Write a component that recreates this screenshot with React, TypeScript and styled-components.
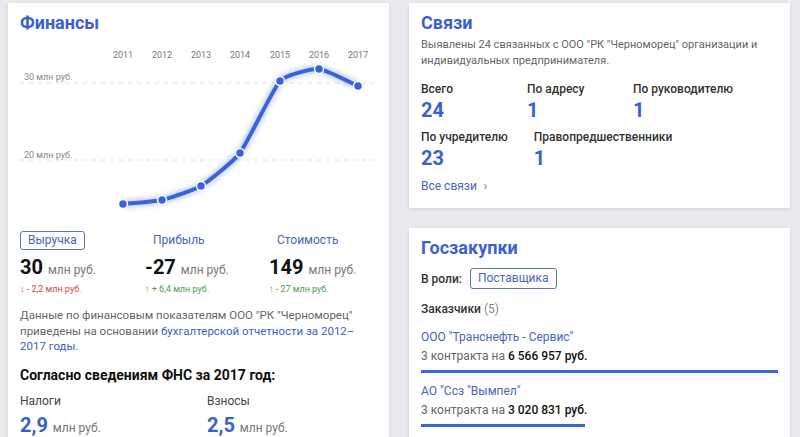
import React from "react";
import styled, { createGlobalStyle } from "styled-components";

const GlobalStyle = createGlobalStyle`
  html, body {
    margin: 0;
    padding: 0;
    background: #e8eaed;
    font-family: Roboto, "Noto Sans", sans-serif;
    color: #222;
  }
`;

const years = ["2011", "2012", "2013", "2014", "2015", "2016", "2017"];
const points: [number, number][] = [
  [103, 164],
  [142, 160],
  [181, 146],
  [220, 113],
  [260, 41],
  [299, 29],
  [338, 46],
];

// catmull-rom в кривые безье
const smoothPath = (pts: [number, number][]) => {
  let d = `M ${pts[0][0]} ${pts[0][1]}`;
  for (let i = 0; i < pts.length - 1; i++) {
    const p0 = pts[i - 1] || pts[i];
    const p1 = pts[i];
    const p2 = pts[i + 1];
    const p3 = pts[i + 2] || p2;
    const t = 0.08;
    const c1x = p1[0] + (p2[0] - p0[0]) * t;
    const c1y = p1[1] + (p2[1] - p0[1]) * t;
    const c2x = p2[0] - (p3[0] - p1[0]) * t;
    const c2y = p2[1] - (p3[1] - p1[1]) * t;
    d += ` C ${c1x} ${c1y}, ${c2x} ${c2y}, ${p2[0]} ${p2[1]}`;
  }
  return d;
};

const Chart = () => (
  <ChartSvg width={357} height={180} viewBox="0 0 357 180">
    <defs>
      <filter id="glow" x="-20%" y="-20%" width="140%" height="140%">
        <feGaussianBlur stdDeviation="2.5" />
      </filter>
    </defs>
    {years.map((y, i) => (
      <text key={y} x={points[i][0]} y={18} textAnchor="middle" fontSize="9" fill="#777">
        {y}
      </text>
    ))}
    <text x={4} y={40} fontSize="9" fill="#888">30 млн руб.</text>
    <line x1={0} x2={355} y1={43} y2={43} stroke="#e2e2e2" strokeDasharray="4 5" />
    <text x={4} y={118} fontSize="9" fill="#888">20 млн руб.</text>
    <line x1={0} x2={355} y1={120} y2={120} stroke="#e2e2e2" strokeDasharray="4 5" />
    <path d={smoothPath(points)} fill="none" stroke="#9db3f2" strokeWidth={8} opacity={0.6} filter="url(#glow)" />
    <path d={smoothPath(points)} fill="none" stroke="#3a63d8" strokeWidth={4} strokeLinecap="round" />
    {points.map(([x, y]) => (
      <circle key={x} cx={x} cy={y} r={4.5} fill="#3a63d8" stroke="#fff" strokeWidth={1.5} />
    ))}
  </ChartSvg>
);

const App = () => {
  return (
    <>
      <GlobalStyle />
      <Page>
        <Card>
          <Title>Финансы</Title>
          <Chart />
          <Metrics>
            <Metric>
              <Tab active>Выручка</Tab>
              <Value>
                30 <Unit>млн руб.</Unit>
              </Value>
              <Change down>↓ - 2,2 млн руб.</Change>
            </Metric>
            <Metric>
              <Tab>Прибыль</Tab>
              <Value>
                -27 <Unit>млн руб.</Unit>
              </Value>
              <Change>↑ + 6,4 млн руб.</Change>
            </Metric>
            <Metric>
              <Tab>Стоимость</Tab>
              <Value>
                149 <Unit>млн руб.</Unit>
              </Value>
              <Change>↑ - 27 млн руб.</Change>
            </Metric>
          </Metrics>
          <Note>
            Данные по финансовым показателям ООО "РК "Черноморец" приведены на
            основании <A>бухгалтерской отчетности за 2012–2017 годы.</A>
          </Note>
          <Subtitle>Согласно сведениям ФНС за 2017 год:</Subtitle>
          <Taxes>
            <TaxItem>
              <TaxLabel>Налоги</TaxLabel>
              <TaxValue>
                2,9 <Unit>млн руб.</Unit>
              </TaxValue>
            </TaxItem>
            <TaxItem>
              <TaxLabel>Взносы</TaxLabel>
              <TaxValue>
                2,5 <Unit>млн руб.</Unit>
              </TaxValue>
            </TaxItem>
          </Taxes>
        </Card>

        <Column>
          <Card>
            <Title>Связи</Title>
            <Desc>
              Выявлены 24 связанных с ООО "РК "Черноморец" организации и
              индивидуальных предпринимателя.
            </Desc>
            <Stats>
              <Stat>
                <StatLabel>Всего</StatLabel>
                <StatValue>24</StatValue>
              </Stat>
              <Stat>
                <StatLabel>По адресу</StatLabel>
                <StatValue>1</StatValue>
              </Stat>
              <Stat>
                <StatLabel>По руководителю</StatLabel>
                <StatValue>1</StatValue>
              </Stat>
              <Stat>
                <StatLabel>По учредителю</StatLabel>
                <StatValue>23</StatValue>
              </Stat>
              <Stat>
                <StatLabel>Правопредшественники</StatLabel>
                <StatValue>1</StatValue>
              </Stat>
            </Stats>
            <MoreLink>
              Все связи <Chevron>›</Chevron>
            </MoreLink>
          </Card>

          <Card grow>
            <Title>Госзакупки</Title>
            <RoleRow>
              <b>В роли:</b>
              <Tab active>Поставщика</Tab>
            </RoleRow>
            <Customers>
              Заказчики <Count>(5)</Count>
            </Customers>
            <CustomerList>
              <Customer>
                <CustomerName>ООО "Транснефть - Сервис"</CustomerName>
                <Contracts>
                  3 контракта на <strong>6 566 957 руб.</strong>
                </Contracts>
                <Bar style={{ width: "100%" }} />
              </Customer>
              <Customer>
                <CustomerName>АО "Ссз "Вымпел"</CustomerName>
                <Contracts>
                  3 контракта на <strong>3 020 831 руб.</strong>
                </Contracts>
                <Bar style={{ width: "46%" }} />
              </Customer>
            </CustomerList>
          </Card>
        </Column>
      </Page>
    </>
  );
};

const Page = styled.div`
  display: grid;
  grid-template-columns: 381px 381px;
  column-gap: 20px;
  padding: 3px 0 0 8px;
  height: 434px;
  overflow: hidden;
`;

const Column = styled.div`
  display: flex;
  flex-direction: column;
  gap: 20px;
`;

const Card = styled.div<{ grow?: boolean }>`
  background: #fff;
  box-shadow: 0 1px 4px rgba(0, 0, 0, 0.1);
  padding: 8px 12px 12px;
  box-sizing: border-box;
  ${(p) => (p.grow ? "flex: 1;" : "")}
`;

const Title = styled.div`
  font-size: 18px;
  font-weight: 700;
  color: #3c5fd0;
  line-height: 24px;
`;

const ChartSvg = styled.svg`
  display: block;
  margin-top: 5px;
  font-family: Roboto, sans-serif;
`;

const Metrics = styled.div`
  display: grid;
  grid-template-columns: 125px 124px 1fr;
  margin-top: 11px;
`;

const Metric = styled.div`
  display: flex;
  flex-direction: column;
  align-items: flex-start;
`;

const Tab = styled.span<{ active?: boolean }>`
  display: inline-block;
  font-size: 12px;
  line-height: 17px;
  padding: 0 7px;
  color: #4a64b8;
  border: 1px solid ${(p) => (p.active ? "#5b72b8" : "transparent")};
  border-radius: 3px;
`;

const Value = styled.div`
  font-size: 20px;
  font-weight: 700;
  color: #111;
  margin-top: 5px;
  line-height: 24px;
`;

const Unit = styled.span`
  font-size: 12px;
  font-weight: 400;
  color: #777;
`;

const Change = styled.div<{ down?: boolean }>`
  font-size: 9px;
  color: ${(p) => (p.down ? "#d04545" : "#4f9a4f")};
  margin-top: 2px;
`;

const Note = styled.div`
  font-size: 11.5px;
  line-height: 15.5px;
  color: #666;
  margin-top: 14px;
`;

const A = styled.span`
  color: #3c5fc0;
`;

const Subtitle = styled.div`
  font-size: 14px;
  font-weight: 700;
  color: #111;
  margin-top: 12px;
`;

const Taxes = styled.div`
  display: grid;
  grid-template-columns: 187px 1fr;
  margin-top: 11px;
`;

const TaxItem = styled.div``;

const TaxLabel = styled.div`
  font-size: 12px;
  color: #444;
`;

const TaxValue = styled.div`
  font-size: 20px;
  font-weight: 700;
  color: #3c5fd0;
  margin-top: 5px;
`;

const Desc = styled.div`
  font-size: 11px;
  line-height: 16px;
  color: #666;
  margin-top: 2px;
`;

const Stats = styled.div`
  display: flex;
  flex-wrap: wrap;
  column-gap: 26px;
  row-gap: 6px;
  margin-top: 12px;
`;

const Stat = styled.div`
  min-width: 80px;
`;

const StatLabel = styled.div`
  font-size: 12px;
  font-weight: 500;
  color: #333;
  line-height: 16px;
`;

const StatValue = styled.div`
  font-size: 20px;
  font-weight: 700;
  color: #3c5fd0;
  line-height: 26px;
`;

const MoreLink = styled.div`
  font-size: 12px;
  color: #4a64b8;
  margin-top: 8px;
  padding-bottom: 3px;
`;

const Chevron = styled.span`
  color: #777;
  margin-left: 4px;
`;

const RoleRow = styled.div`
  display: flex;
  align-items: center;
  gap: 8px;
  font-size: 12px;
  color: #333;
  margin-top: 8px;
  b {
    font-weight: 500;
  }
  span {
    line-height: 19px;
  }
`;

const Customers = styled.div`
  font-size: 12px;
  font-weight: 500;
  color: #333;
  margin-top: 13px;
`;

const Count = styled.span`
  font-weight: 400;
  color: #888;
`;

const CustomerList = styled.div`
  display: flex;
  flex-direction: column;
  gap: 11px;
  margin-top: 14px;
`;

const Customer = styled.div``;

const CustomerName = styled.div`
  font-size: 12px;
  color: #4a64b8;
`;

const Contracts = styled.div`
  font-size: 12px;
  color: #666;
  margin-top: 5px;
  strong {
    color: #111;
    font-weight: 500;
  }
`;

const Bar = styled.div`
  height: 3px;
  background: #3a66d4;
  margin-top: 7px;
`;

export default App;
